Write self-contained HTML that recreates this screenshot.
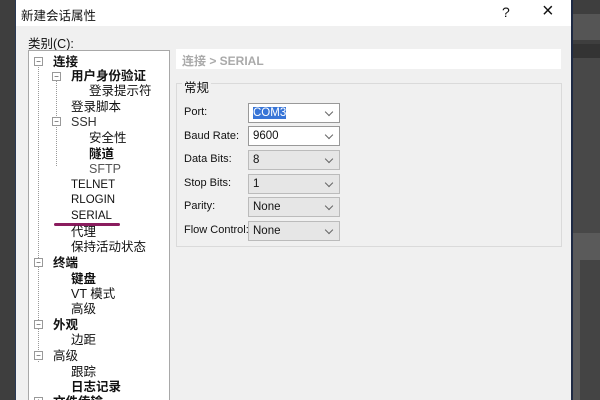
<!DOCTYPE html>
<html style="overflow:hidden"><head><meta charset="utf-8"><style>
html,body{margin:0;width:600px;height:400px;overflow:hidden}
body{background:#3e3e3e;position:relative;font-family:"Liberation Sans","Noto Sans CJK SC",sans-serif;font-size:12px;color:#111}
.a{position:absolute}
#dlg{left:15px;top:0;width:555px;height:400px;background:#f0f0f0;border-left:1px solid #2b3a55;border-right:2px solid #1e2a44;overflow:hidden}
#title{left:0;top:0;width:555px;height:26px;background:#fff}
.tree{left:12px;top:50px;width:140px;height:360px;background:#fff;border:1px solid #a8a8a8}
.ti{position:absolute;white-space:nowrap;line-height:14px;font-size:12.5px}
.b{font-weight:bold}
.ex{position:absolute;width:7px;height:7px;border:1px solid #999;background:#fff;font-size:8px;line-height:7px;text-align:center;color:#333}
.combo{position:absolute;left:232px;width:86px;height:18px;border:1px solid #bbb;background:#e6e6e6;line-height:18px;padding-left:4px;box-sizing:content-box;font-size:11.5px}
.combo.w{background:#fff;border-color:#999}
.combo:after{content:"";position:absolute;right:7px;top:5px;width:5px;height:5px;border-right:1px solid #666;border-bottom:1px solid #666;transform:rotate(45deg)}
.lab{position:absolute;left:168px;font-size:11px;white-space:nowrap}
</style></head><body>
<div class="a" style="left:571px;top:14px;width:29px;height:26px;background:#555"></div>
<div class="a" style="left:571px;top:44px;width:29px;height:14px;background:#333"></div>
<div class="a" style="left:571px;top:58px;width:29px;height:175px;background:#484848"></div>
<div class="a" style="left:571px;top:233px;width:29px;height:167px;background:#5a5a5a"></div>
<div class="a" style="left:580px;top:260px;width:20px;height:140px;background:#444"></div>
<div class="a" id="dlg">
 <div class="a" id="title"><span class="a" style="left:5px;top:5px;font-size:12.5px">新建会话属性</span>
  <span class="a" style="left:486px;top:4px;font-size:14px">?</span>
  <span class="a" style="left:526px;top:0px;font-size:20px;font-weight:300">×</span></div>
 <span class="a" style="left:12px;top:33px;font-size:12.5px">类别(C):</span>
 <div class="a tree">
  <div class="a" style="left:9px;top:11px;width:0;height:300px;border-left:1px dotted #999"></div>
  <div class="a" style="left:27px;top:25px;width:0;height:90px;border-left:1px dotted #999"></div>
  <span class="ex" style="left:5px;top:6px">−</span><span class="ti b" style="left:24px;top:4px">连接</span>
  <span class="ex" style="left:23px;top:21px">−</span><span class="ti b" style="left:42px;top:18px">用户身份验证</span>
  <span class="ti" style="left:60px;top:33px">登录提示符</span>
  <span class="ti" style="left:42px;top:49px">登录脚本</span>
  <span class="ex" style="left:23px;top:66px">−</span><span class="ti" style="left:42px;top:64px;color:#333">SSH</span>
  <span class="ti" style="left:60px;top:80px">安全性</span>
  <span class="ti b" style="left:60px;top:96px">隧道</span>
  <span class="ti" style="left:60px;top:111px;color:#555">SFTP</span>
  <span class="ti" style="left:42px;top:127px;font-size:11.5px">TELNET</span>
  <span class="ti" style="left:42px;top:142px;font-size:11.5px">RLOGIN</span>
  <span class="ti" style="left:42px;top:158px;font-size:11.5px">SERIAL</span>
  <div class="a" style="left:25px;top:172px;width:66px;height:3px;background:#8a1c5e;border-radius:2px"></div>
  <span class="ti" style="left:42px;top:174px">代理</span>
  <span class="ti" style="left:42px;top:189px">保持活动状态</span>
  <span class="ex" style="left:5px;top:207px">−</span><span class="ti b" style="left:24px;top:205px">终端</span>
  <span class="ti b" style="left:42px;top:221px">键盘</span>
  <span class="ti" style="left:42px;top:236px">VT 模式</span>
  <span class="ti" style="left:42px;top:251px">高级</span>
  <span class="ex" style="left:5px;top:269px">−</span><span class="ti b" style="left:24px;top:267px">外观</span>
  <span class="ti" style="left:42px;top:282px">边距</span>
  <span class="ex" style="left:5px;top:300px">−</span><span class="ti" style="left:24px;top:298px">高级</span>
  <span class="ti" style="left:42px;top:314px">跟踪</span>
  <span class="ti b" style="left:42px;top:329px">日志记录</span>
  <span class="ex" style="left:5px;top:346px">+</span><span class="ti b" style="left:24px;top:344px">文件传输</span>
 </div>
 <div class="a" style="left:160px;top:49px;width:385px;height:20px;background:#fff"><span class="a" style="left:6px;top:3px;color:#aaa;font-weight:bold;font-size:12px">连接 &gt; SERIAL</span></div>
 <div class="a" style="left:160px;top:83px;width:384px;height:162px;border:1px solid #dadada"></div>
 <span class="a" style="left:166px;top:77px;background:#f0f0f0;padding:0 2px;font-size:12.5px">常规</span>
 <span class="lab" style="top:106px">Port:</span><div class="combo w" style="top:103px"><span style="background:#3875d7;color:#fff">COM3</span></div>
 <span class="lab" style="top:130px">Baud Rate:</span><div class="combo w" style="top:126px">9600</div>
 <span class="lab" style="top:153px">Data Bits:</span><div class="combo" style="top:150px">8</div>
 <span class="lab" style="top:177px">Stop Bits:</span><div class="combo" style="top:174px">1</div>
 <span class="lab" style="top:200px">Parity:</span><div class="combo" style="top:197px">None</div>
 <span class="lab" style="top:224px">Flow Control:</span><div class="combo" style="top:221px">None</div>
</div>
</body></html>
